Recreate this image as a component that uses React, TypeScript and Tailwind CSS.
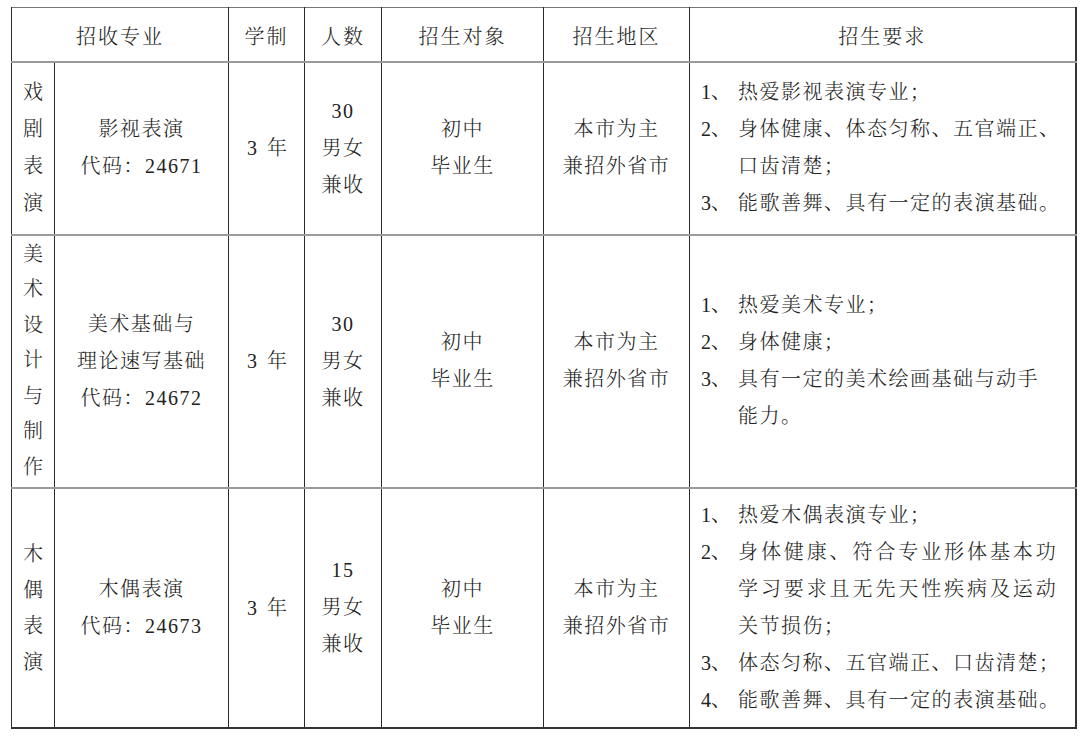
import React from "react";

type Req = { n: string; lines: string[]; wide?: boolean };

type Row = {
  group: string[];
  groupLeading: string;
  height: string;
  major: string[];
  count: string[];
  reqs: Req[];
};

const rows: Row[] = [
  {
    group: ["戏", "剧", "表", "演"],
    groupLeading: "leading-[37px]",
    height: "h-[173px]",
    major: ["影视表演", "代码：24671"],
    count: ["30", "男女", "兼收"],
    reqs: [
      { n: "1、", lines: ["热爱影视表演专业；"] },
      { n: "2、", lines: ["身体健康、体态匀称、五官端正、", "口齿清楚；"] },
      { n: "3、", lines: ["能歌善舞、具有一定的表演基础。"] },
    ],
  },
  {
    group: ["美", "术", "设", "计", "与", "制", "作"],
    groupLeading: "leading-[35.5px]",
    height: "h-[253px]",
    major: ["美术基础与", "理论速写基础", "代码：24672"],
    count: ["30", "男女", "兼收"],
    reqs: [
      { n: "1、", lines: ["热爱美术专业；"] },
      { n: "2、", lines: ["身体健康；"] },
      { n: "3、", lines: ["具有一定的美术绘画基础与动手", "能力。"] },
    ],
  },
  {
    group: ["木", "偶", "表", "演"],
    groupLeading: "leading-[36px]",
    height: "h-[240px]",
    major: ["木偶表演", "代码：24673"],
    count: ["15", "男女", "兼收"],
    reqs: [
      { n: "1、", lines: ["热爱木偶表演专业；"] },
      {
        n: "2、",
        lines: ["身体健康、符合专业形体基本功", "学习要求且无先天性疾病及运动", "关节损伤；"],
        wide: true,
      },
      { n: "3、", lines: ["体态匀称、五官端正、口齿清楚；"] },
      { n: "4、", lines: ["能歌善舞、具有一定的表演基础。"] },
    ],
  },
];

const hCell =
  "p-0 pt-[5px] border-b-2 border-b-[#9a9a9a] border-x border-x-[#2a2a2a] text-center align-middle font-light tracking-[2px]";
const cell =
  "p-0 border-b-2 border-b-[#9a9a9a] border-x border-x-[#2a2a2a] text-center align-middle";

const Lines = ({ items, leading = "leading-[37px]" }: { items: string[]; leading?: string }) => (
  <>
    {items.map((t, i) => (
      <div key={i} className={leading}>
        {t}
      </div>
    ))}
  </>
);

export default function App() {
  return (
    <div className="min-h-[738px] bg-white pl-[11px] pt-[7px] text-[#222] text-[20px] tracking-[1.5px] [font-family:'Liberation_Serif','Noto_Serif_CJK_SC','Noto_Sans_CJK_SC',serif] font-light">
      <table className="table-fixed border-collapse w-[1064px] border-t border-t-[#777] border-l border-l-[#555] border-r-2 border-r-[#333]">
        <colgroup>
          <col className="w-[43px]" />
          <col className="w-[174px]" />
          <col className="w-[76px]" />
          <col className="w-[77px]" />
          <col className="w-[162px]" />
          <col className="w-[146px]" />
          <col className="w-[386px]" />
        </colgroup>
        <thead>
          <tr className="h-[54px]">
            <th colSpan={2} className={hCell}>招收专业</th>
            <th className={hCell}>学制</th>
            <th className={hCell}>人数</th>
            <th className={hCell}>招生对象</th>
            <th className={hCell}>招生地区</th>
            <th className={hCell}>招生要求</th>
          </tr>
        </thead>
        <tbody>
          {rows.map((r, ri) => {
            const last = ri === rows.length - 1;
            const rowCell = last ? `${cell} !border-b-2 !border-b-[#333]` : cell;
            return (
              <tr key={ri} className={r.height}>
                <td className={`${rowCell} tracking-normal`}>
                  <Lines items={r.group} leading={r.groupLeading} />
                </td>
                <td className={rowCell}>
                  <Lines items={r.major} />
                </td>
                <td className={`${rowCell} tracking-normal`}>
                  <span className="inline-block pl-[1px]">3&nbsp;&nbsp;年</span>
                </td>
                <td className={rowCell}>
                  <Lines items={r.count} />
                </td>
                <td className={rowCell}>
                  <Lines items={["初中", "毕业生"]} />
                </td>
                <td className={rowCell}>
                  <Lines items={["本市为主", "兼招外省市"]} />
                </td>
                <td className={`${rowCell} !text-left pl-[11px]`}>
                  {r.reqs.map((q, qi) => (
                    <div key={qi} className="flex leading-[37px]">
                      <span className="w-[37px] shrink-0 tracking-normal">{q.n}</span>
                      <div>
                        {q.lines.map((l, li) => (
                          <div
                            key={li}
                            className={`whitespace-nowrap ${q.wide && li < 2 ? "tracking-[2.9px]" : ""}`}
                          >
                            {l}
                          </div>
                        ))}
                      </div>
                    </div>
                  ))}
                </td>
              </tr>
            );
          })}
        </tbody>
      </table>
    </div>
  );
}
